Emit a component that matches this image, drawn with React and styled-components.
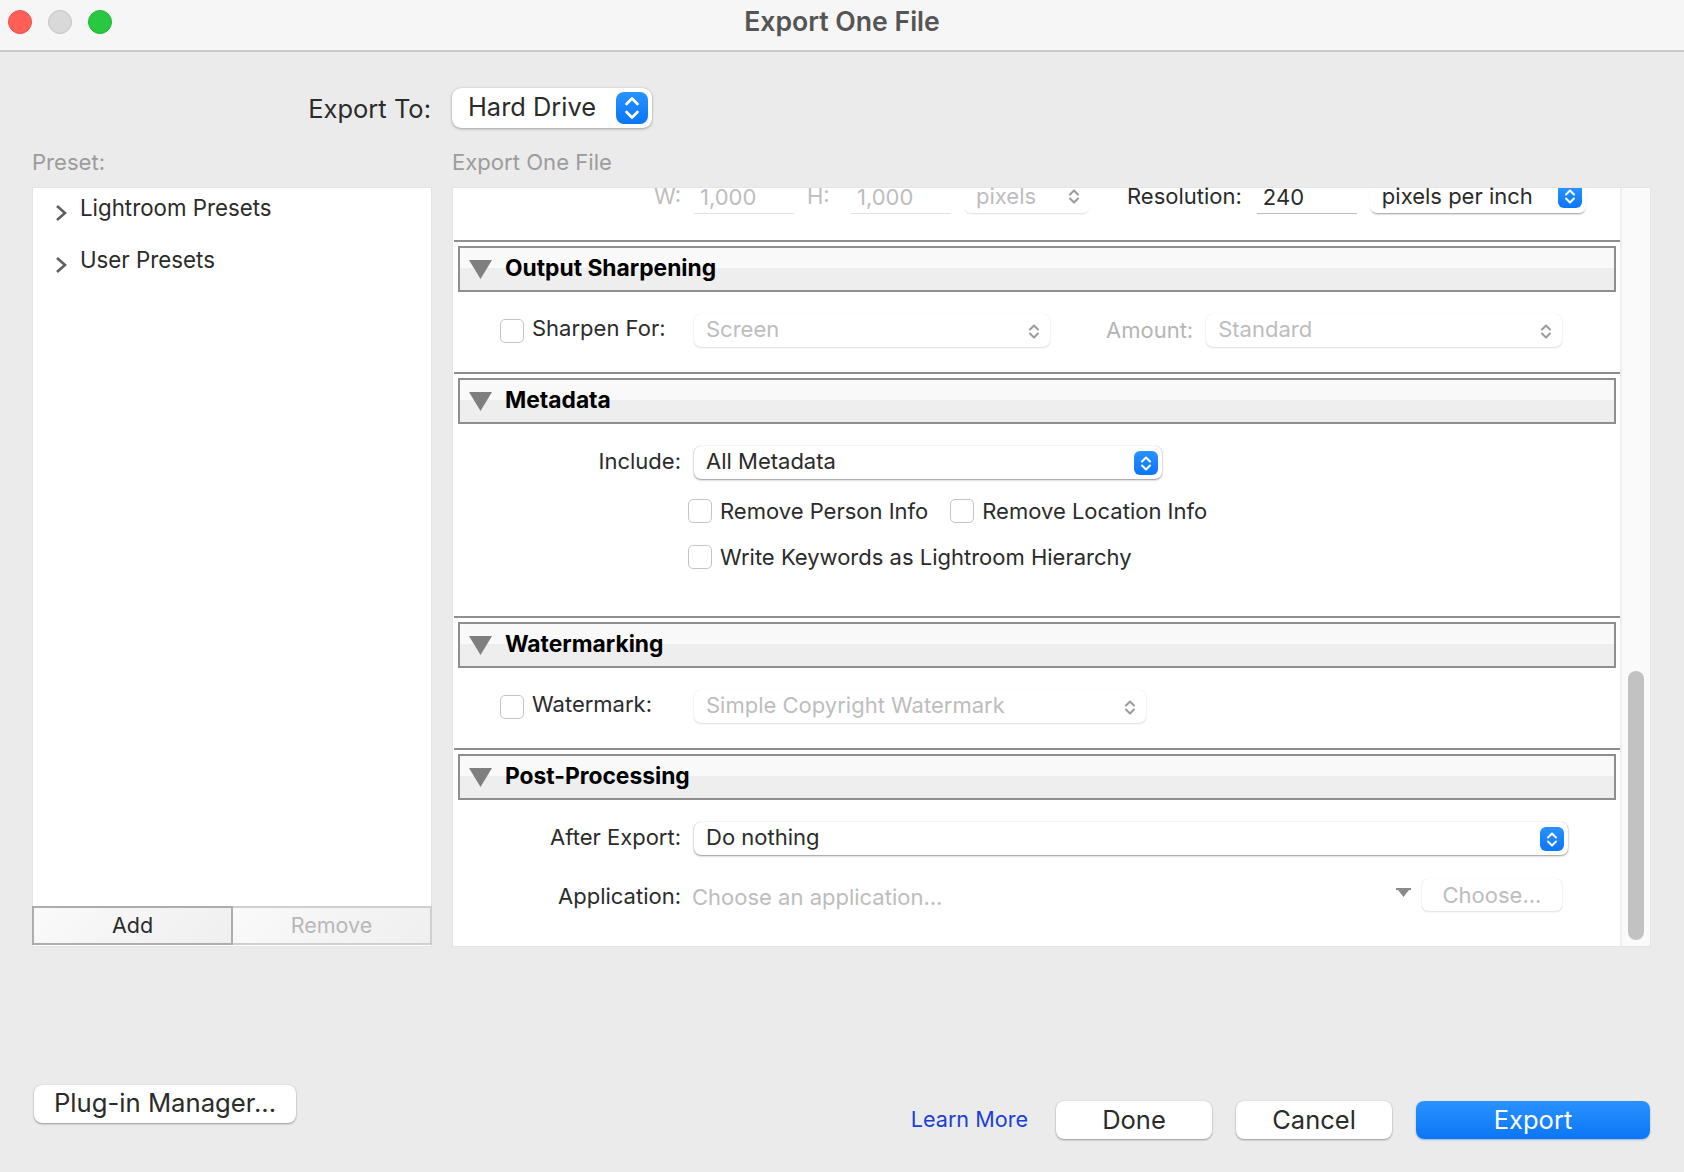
import React from 'react';
import styled, { createGlobalStyle } from 'styled-components';

function App() {
  return (
    <Window>
      <GlobalStyle />
      <TitleBar>
        <Lights>
          <Light $color="#ff5f57" $edge="#e5504a" />
          <Light $color="#d9d9d9" $edge="#c4c4c4" />
          <Light $color="#28c840" $edge="#22b338" />
        </Lights>
        <Title>Export One File</Title>
      </TitleBar>

      <Content>
        <ExportRow>
          <ExportLabel>Export To:</ExportLabel>
          <ExportSelect>
            Hard Drive
            <Stepper $big />
          </ExportSelect>
        </ExportRow>

        <Columns>
          <Heading>Preset:</Heading>
          <Heading>Export One File</Heading>

          <PresetPanel>
            <PresetList>
              <PresetItem>
                <Chevron />
                Lightroom Presets
              </PresetItem>
              <PresetItem>
                <Chevron />
                User Presets
              </PresetItem>
            </PresetList>
            <PresetButtons>
              <PresetButton>Add</PresetButton>
              <PresetButton $disabled>Remove</PresetButton>
            </PresetButtons>
          </PresetPanel>

          <SettingsPanel>
            <SettingsScroll>
              <TopRow>
                <TopLabel $dim $width={227} $right>W:</TopLabel>
                <TopField $dim>1,000</TopField>
                <TopLabel $dim $width={31}>H:</TopLabel>
                <TopField $dim>1,000</TopField>
                <TopSelect $width={126} $disabled>
                  pixels
                  <Stepper $plain $clipped />
                </TopSelect>
                <ResolutionLabel>Resolution:</ResolutionLabel>
                <TopField>240</TopField>
                <TopSelect $width={216}>
                  pixels per inch
                  <Stepper $clipped />
                </TopSelect>
              </TopRow>

              <Section title="Output Sharpening">
                <Row>
                  <CheckCell>
                    <Checkbox />
                    <CheckText>Sharpen For:</CheckText>
                  </CheckCell>
                  <Select $width={356} $disabled>
                    Screen
                    <Stepper $plain />
                  </Select>
                  <AmountLabel>Amount:</AmountLabel>
                  <Select $width={356} $disabled>
                    Standard
                    <Stepper $plain />
                  </Select>
                </Row>
              </Section>

              <Section title="Metadata" $bottom={47}>
                <Row>
                  <LabelCell>Include:</LabelCell>
                  <Select $width={468}>
                    All Metadata
                    <Stepper />
                  </Select>
                </Row>
                <CheckRow $top={20}>
                  <CheckItem>
                    <Checkbox />
                    Remove Person Info
                  </CheckItem>
                  <CheckItem>
                    <Checkbox />
                    Remove Location Info
                  </CheckItem>
                </CheckRow>
                <CheckRow $top={22}>
                  <CheckItem>
                    <Checkbox />
                    Write Keywords as Lightroom Hierarchy
                  </CheckItem>
                </CheckRow>
              </Section>

              <Section title="Watermarking">
                <Row>
                  <CheckCell>
                    <Checkbox />
                    <CheckText>Watermark:</CheckText>
                  </CheckCell>
                  <Select $width={452} $disabled>
                    Simple Copyright Watermark
                    <Stepper $plain />
                  </Select>
                </Row>
              </Section>

              <Section title="Post-Processing" $bottom={29}>
                <Row>
                  <LabelCell>After Export:</LabelCell>
                  <Select $width={874}>
                    Do nothing
                    <Stepper />
                  </Select>
                </Row>
                <AppRow>
                  <LabelCell>Application:</LabelCell>
                  <AppField>
                    Choose an application...
                    <ComboArrow />
                  </AppField>
                  <ChooseButton>Choose...</ChooseButton>
                </AppRow>
              </Section>
            </SettingsScroll>
            <ScrollTrack>
              <ScrollThumb />
            </ScrollTrack>
          </SettingsPanel>
        </Columns>

        <Footer>
          <PluginButton>Plug-in Manager...</PluginButton>
          <FooterRight>
            <LearnMore>Learn More</LearnMore>
            <FooterButton>Done</FooterButton>
            <FooterButton>Cancel</FooterButton>
            <ExportButton>Export</ExportButton>
          </FooterRight>
        </Footer>
      </Content>
    </Window>
  );
}

function Section({ title, $bottom = 25, children }) {
  return (
    <SectionBox>
      <SectionHeader>
        <svg width="23" height="19" viewBox="0 0 23 19">
          <path d="M0 0h23L11.5 19z" fill="#7f7f7f" />
        </svg>
        <SectionTitle>{title}</SectionTitle>
      </SectionHeader>
      <SectionBody $bottom={$bottom}>{children}</SectionBody>
    </SectionBox>
  );
}

function Stepper({ $big, $plain, $clipped }) {
  const color = $plain ? '#9a9a9a' : '#fff';
  if ($big) {
    return (
      <StepperBox $big>
        <svg width="32" height="32" viewBox="0 0 32 32" fill="none">
          <path
            d="M10.5 12L16 6.5l5.5 5.5M10.5 20l5.5 5.5 5.5-5.5"
            stroke={color}
            strokeWidth="2.6"
            strokeLinecap="round"
            strokeLinejoin="round"
          />
        </svg>
      </StepperBox>
    );
  }
  // the scrolled row cuts the top 4px of the button off
  return (
    <StepperBox $plain={$plain} $clipped={$clipped}>
      <svg width="24" height={$clipped ? 20 : 24} viewBox={$clipped ? '0 4 24 20' : '0 0 24 24'} fill="none">
        <path
          d="M8 10.5L12 6.5l4 4M8 14.5l4 4 4-4"
          stroke={color}
          strokeWidth="2"
          strokeLinecap="round"
          strokeLinejoin="round"
        />
      </svg>
    </StepperBox>
  );
}

function Chevron() {
  return (
    <ChevronIcon width="12" height="18" viewBox="0 0 12 18" fill="none">
      <path d="M2 2l8 7-8 7" stroke="#5f5f5f" strokeWidth="2.6" />
    </ChevronIcon>
  );
}

function ComboArrow() {
  return (
    <ArrowIcon width="15" height="9" viewBox="0 0 15 9">
      <path d="M0 0h15v2h-2L7.5 9 2 2H0z" fill="#8a8a8a" />
    </ArrowIcon>
  );
}

const GlobalStyle = createGlobalStyle`
  html, body {
    margin: 0;
    padding: 0;
  }
  body {
    font-family: Inter, "Noto Sans", sans-serif;
    color: #2b2b2b;
  }
`;

const Window = styled.div`
  width: 1684px;
  height: 1172px;
  overflow: hidden;
  background: #ebebeb;
`;

const TitleBar = styled.div`
  position: relative;
  display: flex;
  align-items: center;
  justify-content: center;
  height: 50px;
  background: #f6f6f6;
  border-bottom: 2px solid #c9c9c9;
`;

const Lights = styled.div`
  position: absolute;
  left: 8px;
  top: 10px;
  display: flex;
  gap: 16px;
`;

const Light = styled.span`
  width: 24px;
  height: 24px;
  border-radius: 50%;
  box-sizing: border-box;
  background: ${(props) => props.$color};
  border: 1px solid ${(props) => props.$edge};
`;

const Title = styled.div`
  padding-bottom: 8px;
  font-size: 26.6px;
  font-weight: 600;
  color: #555;
`;

const Content = styled.div`
  padding: 0 34px 0 33px;
`;

const ExportRow = styled.div`
  display: grid;
  grid-template-columns: 398px 200px;
  column-gap: 21px;
  align-items: center;
  padding-top: 36px;
`;

const ExportLabel = styled.div`
  justify-self: end;
  font-size: 25.5px;
  padding-top: 1px;
`;

const ExportSelect = styled.div`
  display: flex;
  align-items: flex-start;
  justify-content: space-between;
  box-sizing: border-box;
  height: 40px;
  padding: 0 4px 0 16px;
  font-size: 25.4px;
  line-height: 38px;
  background: #fff;
  border-radius: 9px;
  box-shadow: 0 1px 3px rgba(0, 0, 0, 0.3), 0 0 1px rgba(0, 0, 0, 0.2);
`;

const StepperBox = styled.span`
  display: flex;
  flex-shrink: 0;
  align-self: ${(props) => (props.$clipped ? 'flex-start' : 'center')};
  width: ${(props) => (props.$big ? '32px' : '24px')};
  height: ${(props) => (props.$big ? '32px' : props.$clipped ? '20px' : '24px')};
  border-radius: ${(props) => (props.$big ? '8px' : props.$clipped ? '0 0 6px 6px' : '6px')};
  background: ${(props) => (props.$plain ? 'transparent' : 'linear-gradient(#2a92ff, #0b76f6)')};
`;

const Columns = styled.div`
  display: grid;
  grid-template-columns: 398px 1197px;
  grid-template-rows: 60px 758px;
  column-gap: 22px;
`;

const Heading = styled.div`
  align-self: start;
  margin-left: -1px;
  padding-top: 20px;
  font-size: 22.1px;
  line-height: 28px;
  color: #9c9c9c;
`;

const PresetPanel = styled.div`
  display: flex;
  flex-direction: column;
  background: #fff;
  box-shadow: 0 0 0 1px #e4e4e4;
`;

const PresetList = styled.div`
  flex: 1;
  display: flex;
  flex-direction: column;
  gap: 13px;
`;

const PresetItem = styled.div`
  display: flex;
  align-items: center;
  height: 39px;
  padding-left: 22px;
  font-size: 22.3px;
`;

const ChevronIcon = styled.svg`
  margin: 11px 13px 0 0;
`;

const PresetButtons = styled.div`
  display: grid;
  grid-template-columns: 201px 1fr;
  height: 39px;
  margin: 0 -1px 1px;
`;

const PresetButton = styled.div`
  display: flex;
  align-items: center;
  justify-content: center;
  box-sizing: border-box;
  padding-bottom: 1px;
  font-size: 21.5px;
  color: ${(props) => (props.$disabled ? '#b8b8b8' : '#2b2b2b')};
  border: 2px solid ${(props) => (props.$disabled ? '#cfcfcf' : '#adadad')};
  border-left-width: ${(props) => (props.$disabled ? '0' : '2px')};
  background: linear-gradient(135deg, #fafafa, #efefef);
`;

const SettingsPanel = styled.div`
  display: flex;
  background: #fff;
  box-shadow: 0 0 0 1px #e4e4e4;
`;

const SettingsScroll = styled.div`
  flex-shrink: 0;
  width: 1166px;
  margin-left: 1px;
  font-size: 22px;
`;

const ScrollTrack = styled.div`
  position: relative;
  flex: 1;
  background: #fafafa;
  border-left: 2px solid #eeeeee;
`;

const ScrollThumb = styled.div`
  position: absolute;
  left: 6px;
  top: 483px;
  bottom: 6px;
  width: 16px;
  border-radius: 8px;
  background: #c2c2c2;
`;

const TopRow = styled.div`
  display: flex;
  align-items: flex-start;
  gap: 13px;
  height: 25px;
  margin-bottom: 27px;
  line-height: 17px;
`;

const TopLabel = styled.div`
  flex-shrink: 0;
  width: ${(props) => props.$width}px;
  text-align: ${(props) => (props.$right ? 'right' : 'left')};
  color: ${(props) => (props.$dim ? '#bdbdbd' : '#2b2b2b')};
`;

const ResolutionLabel = styled.div`
  margin: 0 2px 0 24px;
  white-space: nowrap;
`;

const TopField = styled.div`
  box-sizing: border-box;
  width: 100px;
  height: 25px;
  padding: 1px 6px 0;
  color: ${(props) => (props.$dim ? '#bdbdbd' : '#2b2b2b')};
  box-shadow: 0 1px 0 ${(props) => (props.$dim ? '#e2e2e2' : '#bcbcbc')};
`;

const TopSelect = styled.div`
  display: flex;
  justify-content: space-between;
  box-sizing: border-box;
  flex-shrink: 0;
  width: ${(props) => props.$width}px;
  height: 25px;
  padding: 0 4px 0 12px;
  background: #fff;
  border-radius: 0 0 7px 7px;
  color: ${(props) => (props.$disabled ? '#bdbdbd' : '#2b2b2b')};
  box-shadow: 0 2px 2px -1px rgba(0, 0, 0, ${(props) => (props.$disabled ? 0.14 : 0.4)});
`;

const LabelCell = styled.div`
  flex-shrink: 0;
  box-sizing: border-box;
  width: 227px;
  padding-bottom: 3px;
  text-align: right;
`;

const Select = styled.div`
  display: flex;
  align-items: flex-start;
  justify-content: space-between;
  box-sizing: border-box;
  flex-shrink: 0;
  width: ${(props) => props.$width}px;
  height: 33px;
  padding: 0 4px 0 12px;
  line-height: 31px;
  background: #fff;
  border-radius: 7px;
  color: ${(props) => (props.$disabled ? '#bdbdbd' : '#2b2b2b')};
  box-shadow: ${(props) =>
    props.$disabled
      ? '0 1px 2px rgba(0, 0, 0, 0.12), 0 0 1px rgba(0, 0, 0, 0.15)'
      : '0 1px 2px rgba(0, 0, 0, 0.4), 0 0 1px rgba(0, 0, 0, 0.25)'};
`;

const SectionBox = styled.section`
  border-top: 2px solid #8e8e8e;
  padding-top: 4px;
`;

const SectionHeader = styled.div`
  display: flex;
  align-items: center;
  gap: 13px;
  box-sizing: border-box;
  height: 46px;
  margin: 0 4px;
  padding-left: 9px;
  color: #000;
  border: 2px solid #8e8e8e;
  background: linear-gradient(#f9f9f9 47%, #eeeeee 47%);
`;

const SectionTitle = styled.div`
  padding-bottom: 3px;
  font-size: 22.8px;
  font-weight: 700;
`;

const SectionBody = styled.div`
  padding: 22px 0 ${(props) => props.$bottom}px;
`;

const Row = styled.div`
  display: flex;
  align-items: center;
  gap: 13px;
  height: 33px;
`;

const CheckCell = styled.div`
  display: flex;
  align-items: center;
  gap: 8px;
  flex-shrink: 0;
  box-sizing: border-box;
  width: 227px;
  padding-left: 46px;
  white-space: nowrap;
`;

const CheckText = styled.span`
  padding-bottom: 5px;
`;

const Checkbox = styled.span`
  flex-shrink: 0;
  box-sizing: border-box;
  width: 24px;
  height: 24px;
  background: #fff;
  border: 1px solid #c4c4c4;
  border-radius: 5px;
`;

const AmountLabel = styled.div`
  margin-left: 43px;
  padding-bottom: 2px;
  color: #b5b5b5;
`;

const CheckRow = styled.div`
  display: flex;
  gap: 22px;
  height: 24px;
  margin-top: ${(props) => props.$top}px;
  padding-left: 234px;
`;

const CheckItem = styled.div`
  display: flex;
  align-items: center;
  gap: 8px;
`;

const AppRow = styled.div`
  display: flex;
  align-items: center;
  gap: 11px;
  height: 33px;
  margin-top: 26px;
`;

const AppField = styled.div`
  display: flex;
  align-items: center;
  justify-content: space-between;
  width: 719px;
  padding-bottom: 2px;
  color: #bdbdbd;
`;

const ArrowIcon = styled.svg`
  margin-bottom: 8px;
`;

const ChooseButton = styled.div`
  display: flex;
  align-items: center;
  justify-content: center;
  box-sizing: border-box;
  width: 140px;
  height: 32px;
  margin-bottom: 6px;
  border-radius: 6px;
  color: #bdbdbd;
  background: #fff;
  box-shadow: 0 1px 2px rgba(0, 0, 0, 0.12), 0 0 1px rgba(0, 0, 0, 0.15);
`;

const Footer = styled.div`
  display: flex;
  justify-content: space-between;
  align-items: flex-start;
  padding-top: 139px;
`;

const PluginButton = styled.div`
  display: flex;
  align-items: center;
  justify-content: center;
  box-sizing: border-box;
  width: 262px;
  height: 38px;
  margin-left: 1px;
  padding-bottom: 3px;
  font-size: 25.7px;
  background: #fff;
  border-radius: 8px;
  box-shadow: 0 1px 2px rgba(0, 0, 0, 0.35), 0 0 1px rgba(0, 0, 0, 0.2);
`;

const FooterRight = styled.div`
  display: flex;
  align-items: center;
  gap: 24px;
  margin-top: 16px;
`;

const LearnMore = styled.div`
  margin-right: 4px;
  padding-bottom: 2px;
  font-size: 21.6px;
  color: #1a3fd6;
`;

const FooterButton = styled.div`
  display: flex;
  align-items: center;
  justify-content: center;
  box-sizing: border-box;
  width: 156px;
  height: 38px;
  padding-bottom: 1px;
  font-size: 25.5px;
  background: #fff;
  border-radius: 8px;
  box-shadow: 0 1px 2px rgba(0, 0, 0, 0.35), 0 0 1px rgba(0, 0, 0, 0.2);
`;

const ExportButton = styled(FooterButton)`
  width: 234px;
  color: #fff;
  background: linear-gradient(#2a92ff, #0b76f6);
  box-shadow: 0 1px 2px rgba(0, 80, 200, 0.35);
`;

export default App;
